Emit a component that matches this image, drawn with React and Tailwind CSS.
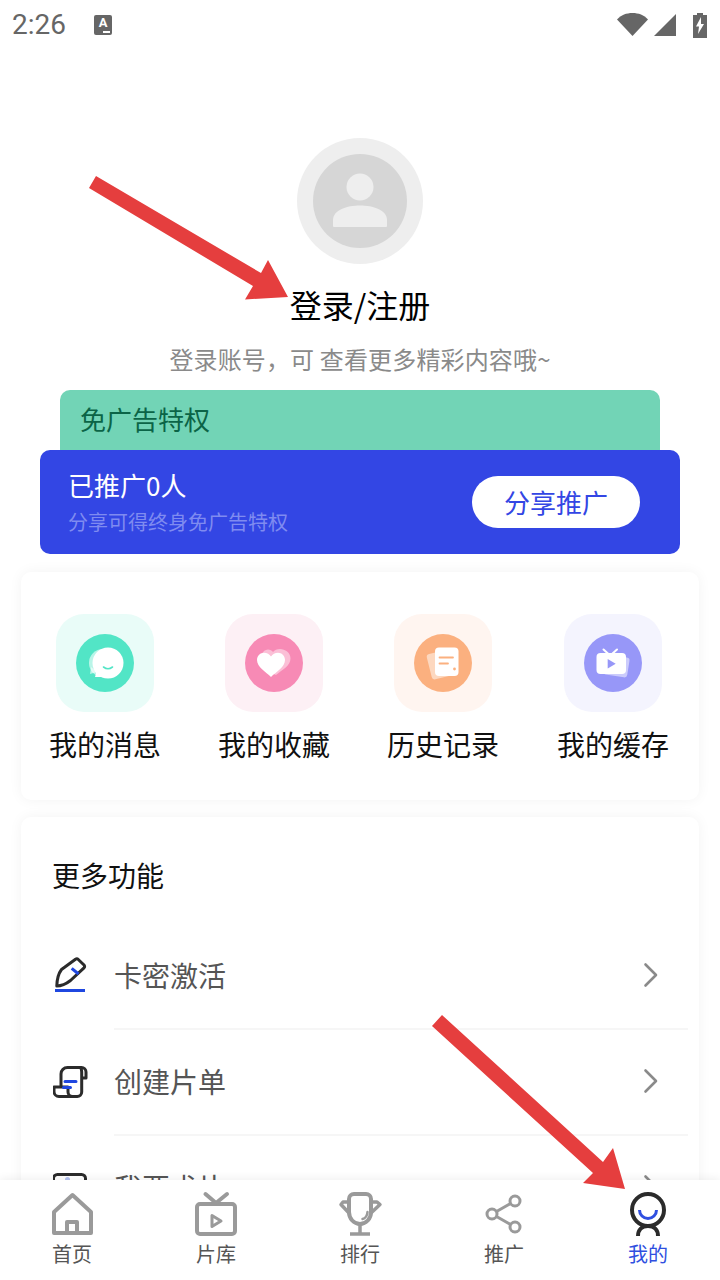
const DARK = '#2b2b2b';
const BLUE = '#2f4fe0';
const GRAY = '#9a9a9a';

const MessageGlyph = () => (
  <svg width="58" height="58" viewBox="0 0 58 58">
    <circle cx="29" cy="29" r="29" fill="#52e5c6" />
    <circle cx="27" cy="29" r="14" fill="#fff" opacity="0.6" />
    <path d="M15 33 L14 40 L21 38Z" fill="#fff" opacity="0.6" />
    <circle cx="32" cy="29" r="15.5" fill="#fff" />
    <path d="M21 36 L19 43 L28 43Z" fill="#fff" />
    <path d="M27.5 33 Q32 36.5 36.5 33" fill="none" stroke="#52e5c6" strokeWidth="1.6" strokeLinecap="round" />
  </svg>
);

const HEART = 'M26 43C21 38 12 33 12 26C12 21.5 15.5 18.7 19 18.7C22 18.7 24.5 20 26 22.5C27.5 20 30 18.7 33 18.7C36.5 18.7 40 21.5 40 26C40 33 31 38 26 43Z';

const HeartGlyph = () => (
  <svg width="58" height="58" viewBox="0 0 58 58">
    <circle cx="29" cy="29" r="29" fill="#f78ab5" />
    <path d="M26 39C21 35 16 31 16 24C16 19 19.5 15.5 23 15.5C25 15.5 27 16.5 28 18C29.5 16 32 15 35 15C40 15 45.5 18.5 45.5 24.5C45.5 32 37 36 31 41Z" fill="#fff" opacity="0.45" />
    <path d={HEART} fill="#fff" />
  </svg>
);

const HistoryGlyph = () => (
  <svg width="58" height="58" viewBox="0 0 58 58">
    <circle cx="29" cy="29" r="29" fill="#fbb07f" />
    <rect x="15" y="18" width="21" height="26" rx="3" fill="#fff" opacity="0.5" transform="rotate(-14 25 31)" />
    <rect x="21" y="13.5" width="23.5" height="28.5" rx="4" fill="#fff" />
    <path d="M25.5 23.5H39M25.5 29.5H34" stroke="#fbb07f" strokeWidth="1.8" strokeLinecap="round" />
    <circle cx="40.5" cy="35" r="1.4" fill="#fbb07f" />
  </svg>
);

const CacheGlyph = () => (
  <svg width="58" height="58" viewBox="0 0 58 58">
    <circle cx="29" cy="29" r="29" fill="#9797f8" />
    <rect x="20" y="22" width="24.5" height="20" rx="3" fill="#fff" opacity="0.5" transform="rotate(9 32 32)" />
    <path d="M19.5 15.5L24.5 20M33 15.5L28 20" stroke="#fff" strokeWidth="2" strokeLinecap="round" />
    <rect x="12.5" y="19" width="29.5" height="21" rx="4" fill="#fff" />
    <path d="M23.7 25V34.4L31.7 29.7Z" fill="#9797f8" />
  </svg>
);

const PenIcon = () => (
  <svg width="36" height="38" viewBox="53 958 36 38" fill="none">
    <path d="M56.8 987C57 980 58.5 974.5 61.5 970.5L75.5 960.3a2.2 2.2 0 0 1 2.8 .2L84 966a2.2 2.2 0 0 1 0 2.8L70.5 981.5C66 985 62 987 56.8 987Z" stroke={DARK} strokeWidth="3" strokeLinejoin="round" />
    <path d="M71.7 969.3L78.5 975" stroke="#1f47e0" strokeWidth="3" />
    <path d="M55 991.5H85" stroke="#1f47e0" strokeWidth="3" />
  </svg>
);

const ScrollIcon = () => (
  <svg width="36" height="38" viewBox="53 1063 36 38" fill="none">
    <path d="M61 1087V1074a6.5 6.5 0 0 1 6.5-6.5H81.5a4.5 4.5 0 0 1 4.5 4.5V1078H81.7" stroke={DARK} strokeWidth="3" strokeLinejoin="round" />
    <path d="M80 1067.5C81 1068 81.7 1070 81.7 1072V1092a4.5 4.5 0 0 1-4.5 4.5H59a5 5 0 0 1-5-5V1087H68V1092a4.5 4.5 0 0 0 4.5 4.5" stroke={DARK} strokeWidth="3" strokeLinejoin="round" />
    <path d="M65 1081.5H76M63.5 1087.5H70.5" stroke="#1f47e0" strokeWidth="3" strokeLinecap="round" />
  </svg>
);

const RequestIcon = () => (
  <svg width="36" height="38" viewBox="0 0 36 38" fill="none">
    <rect x="0.5" y="5.5" width="32" height="28" rx="4" stroke={DARK} strokeWidth="3" />
    <circle cx="14.5" cy="10.5" r="2.5" fill="#b4c2f2" />
  </svg>
);

const Chevron = () => (
  <svg width="16" height="26" viewBox="0 0 16 26" fill="none">
    <path d="M2.5 2.5L13 13L2.5 23.5" stroke="#8a8a8a" strokeWidth="2.6" strokeLinecap="round" strokeLinejoin="round" />
  </svg>
);

const HomeIcon = () => (
  <svg width="48" height="48" viewBox="0 0 48 48" fill="none" stroke={GRAY} strokeWidth="4" strokeLinejoin="round">
    <path d="M6 43V22L24.5 5L43 22V43Z" />
    <path d="M19 43V32H29V43" />
  </svg>
);

const TvIcon = () => (
  <svg width="48" height="48" viewBox="0 0 48 48" fill="none" stroke={GRAY} strokeWidth="4" strokeLinejoin="round">
    <rect x="5" y="14" width="38" height="30" rx="3" />
    <path d="M13.5 4L24 13L35 4" strokeLinecap="round" />
    <path d="M20 25.5v11l9-5.5z" strokeWidth="3" />
  </svg>
);

const TrophyIcon = () => (
  <svg width="48" height="48" viewBox="0 0 48 48" fill="none" stroke={GRAY} strokeWidth="4" strokeLinejoin="round">
    <path d="M18 4h12a5 5 0 0 1 5 5v13a11 12 0 0 1-22 0V9a5 5 0 0 1 5-5z" />
    <path d="M13 12H7L5 14.5L13 23M35 12H41L44 14.5L35 23" strokeWidth="3.5" />
    <path d="M24 34V44M14 44H34" strokeWidth="3.5" />
    <path d="M26.5 29Q31 28 31.5 22" strokeWidth="2.5" strokeLinecap="round" />
  </svg>
);

const ShareIcon = () => (
  <svg width="48" height="48" viewBox="0 0 48 48" fill="none" stroke={GRAY} strokeWidth="3">
    <circle cx="35" cy="11" r="5" />
    <circle cx="12" cy="24" r="5" />
    <circle cx="35" cy="37" r="5" />
    <path d="M16.5 21.5L30.5 13.5M16.5 26.5L30.5 34.5" />
  </svg>
);

const MeIcon = () => (
  <svg width="48" height="48" viewBox="0 0 48 48" fill="none">
    <path d="M14 46c0-6 4-10 10-10s10 4 10 10" stroke={DARK} strokeWidth="4" />
    <circle cx="24" cy="20" r="16" stroke={DARK} strokeWidth="4" fill="#fff" />
    <path d="M15.5 20a8.5 8.5 0 0 0 17 0" stroke={BLUE} strokeWidth="3" />
  </svg>
);

const shortcuts = [
  { label: '我的消息', tile: 'bg-[#e9fcf8]', Glyph: MessageGlyph },
  { label: '我的收藏', tile: 'bg-[#fdf0f5]', Glyph: HeartGlyph },
  { label: '历史记录', tile: 'bg-[#fff5f0]', Glyph: HistoryGlyph },
  { label: '我的缓存', tile: 'bg-[#f4f4fe]', Glyph: CacheGlyph },
];

const rows = [
  { label: '卡密激活', Icon: PenIcon },
  { label: '创建片单', Icon: ScrollIcon },
  { label: '我要求片', Icon: RequestIcon },
];

const tabs = [
  { label: '首页', Icon: HomeIcon },
  { label: '片库', Icon: TvIcon },
  { label: '排行', Icon: TrophyIcon },
  { label: '推广', Icon: ShareIcon },
  { label: '我的', Icon: MeIcon, active: true },
];

const StatusBar = () => (
  <div className="flex h-[50px] items-center justify-between pl-[12px] pr-[13px] text-[#666666]">
    <div className="flex items-center gap-[28px]">
      <span className="font-['Roboto',sans-serif] text-[28px] leading-none">2:26</span>
      <div className="relative h-[20px] w-[18px] rounded-[2px] bg-[#666666]">
        <span className="absolute left-0 top-[1px] w-full text-center font-['Roboto',sans-serif] text-[13px] font-bold leading-[14px] text-white">A</span>
        <span className="absolute bottom-[2px] right-[2px] h-[2px] w-[7px] bg-white" />
      </div>
    </div>
    <svg width="90" height="26" viewBox="0 0 90 26" fill="#666666">
      <path d="M0 7.5C4 3 9.5 1 15.5 1S27 3 31 7.5L15.5 24Z" />
      <path d="M59 2V24H37Z" />
      <path d="M76 3h4V1h6v2h4v23H76Z" />
      <path d="M84 5L79 14.5H82L81 22L87 12H84Z" fill="#fff" />
    </svg>
  </div>
);

const Arrows = () => (
  <svg className="pointer-events-none absolute inset-0 z-20" width="720" height="1280" viewBox="0 0 720 1280" fill="#e53e3e">
    <path d="M96 176L261 273L268 260L288 297L245 299.5L253 286L89 188Z" />
    <path d="M442 1015L603 1162L613 1148L625 1189L583 1183L593 1173L432 1026Z" />
  </svg>
);

export default function App() {
  return (
    <div className="relative h-[1280px] w-[720px] overflow-hidden bg-white font-['Noto_Sans_CJK_SC','Liberation_Sans',sans-serif]">
      <StatusBar />

      <div className="mt-[88px] flex flex-col items-center">
        <div className="flex h-[126px] w-[126px] items-center justify-center rounded-full bg-[#eeeeee]">
          <svg width="94" height="94" viewBox="313 154 94 94">
            <circle cx="360" cy="201" r="47" fill="#d6d6d6" />
            <circle cx="360" cy="187" r="13.5" fill="#eeeeee" />
            <path d="M333 226V220C333 210 347 205.5 360 205.5S387 210 387 220V226a1 1 0 0 1-1 1H334a1 1 0 0 1-1-1Z" fill="#eeeeee" />
          </svg>
        </div>
        <h1 className="mt-[18px] text-[32px] font-normal leading-[44px] text-black">登录/注册</h1>
        <p className="mt-[15px] text-[24px] leading-[36px] tracking-[0.15px] text-[#8a8a8a]">登录账号，可 查看更多精彩内容哦~</p>
      </div>

      <div className="mx-[60px] mt-[13px] h-[70px] rounded-t-[10px] bg-[#72d4b6] pl-[20px] pt-[10px] text-[26px] leading-[38px] text-[#0b6447]">
        免广告特权
      </div>

      <div className="relative mx-[40px] -mt-[10px] flex h-[104px] items-center justify-between rounded-[10px] bg-[#3346e4] pl-[28px] pr-[40px]">
        <div className="pt-[2px]">
          <div className="text-[26px] leading-[36px] text-white">已推广0人</div>
          <div className="mt-[2px] text-[20px] leading-[34px] text-[#7f8bf0]">分享可得终身免广告特权</div>
        </div>
        <div className="flex h-[52px] w-[168px] items-center justify-center rounded-full bg-white pb-[2px] text-[26px] text-[#3346e4]">
          分享推广
        </div>
      </div>

      <div className="mx-[21px] mt-[18px] grid h-[228px] grid-cols-[168px_170px_168px_172px] rounded-[10px] bg-white shadow-[0_0_14px_rgba(0,0,0,0.05)]">
        {shortcuts.map(({ label, tile, Glyph }) => (
          <div key={label} className="flex flex-col items-center pt-[42px]">
            <div className={`flex h-[98px] w-[98px] items-center justify-center rounded-[28px] ${tile}`}>
              <Glyph />
            </div>
            <span className="mt-[12px] text-[28px] leading-[40px] text-[#111111]">{label}</span>
          </div>
        ))}
      </div>

      <div className="mx-[21px] mt-[17px] rounded-[10px] bg-white shadow-[0_0_14px_rgba(0,0,0,0.05)]">
        <div className="flex h-[107px] items-center pl-[31px] pt-[9px] text-[28px] text-[#111111]">更多功能</div>
        {rows.map(({ label, Icon }) => (
          <div key={label} className="flex h-[106px] items-center pl-[32px]">
            <div className="mb-[2px] w-[36px]">
              <Icon />
            </div>
            <div className="ml-[25px] mr-[11px] flex h-full flex-1 items-center justify-between border-b-2 border-[#f6f6f6] pb-[2px] pr-[29px] text-[28px] text-[#555555]">
              {label}
              <Chevron />
            </div>
          </div>
        ))}
      </div>

      <div className="absolute bottom-0 left-0 z-10 grid h-[100px] w-full grid-cols-5 bg-white pt-[10px] shadow-[0_-2px_8px_rgba(0,0,0,0.06)]">
        {tabs.map(({ label, Icon, active }) => (
          <div key={label} className="flex flex-col items-center">
            <Icon />
            <span className={`mt-[2px] text-[20px] leading-[28px] ${active ? 'text-[#2f4fe0]' : 'text-[#555555]'}`}>{label}</span>
          </div>
        ))}
      </div>

      <Arrows />
    </div>
  );
}
